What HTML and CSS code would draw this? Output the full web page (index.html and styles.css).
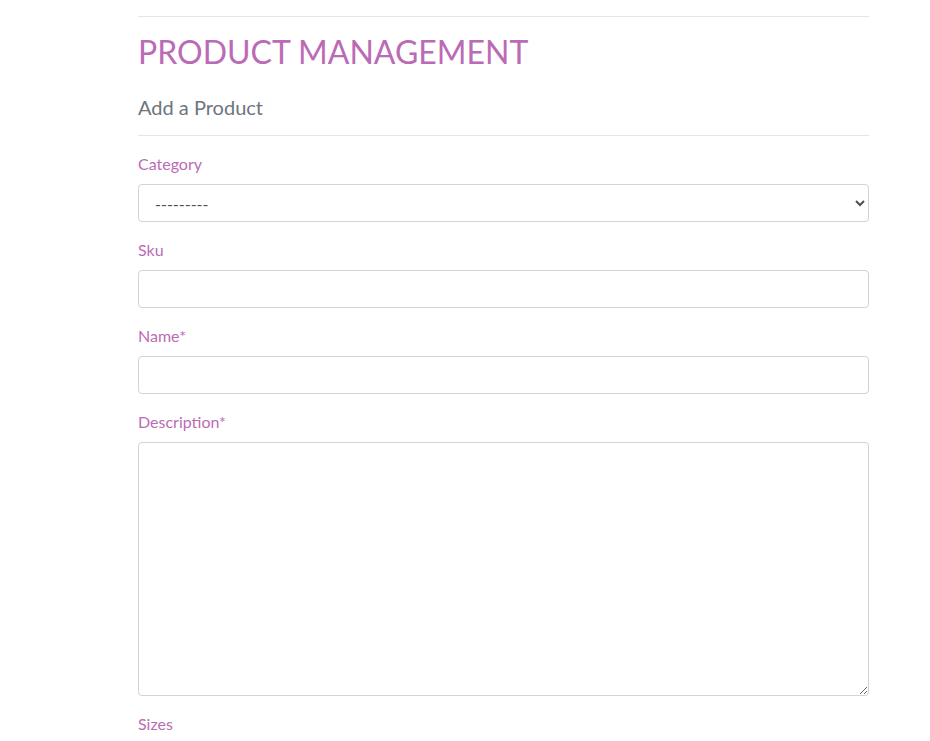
FILE: index.html
```html
<!DOCTYPE html>
<html lang="en">
<head>
<meta charset="utf-8">
<title>Product Management</title>
<link rel="stylesheet" href="styles.css">
</head>
<body>
<div class="container">
  <hr class="rule">
  <h2 class="page-title">PRODUCT MANAGEMENT</h2>
  <h5 class="subtitle">Add a Product</h5>
  <hr class="rule">
  <form class="form">
    <div class="form-group">
      <label class="label" for="category">Category</label>
      <select id="category" class="control select">
        <option>---------</option>
      </select>
    </div>
    <div class="form-group">
      <label class="label" for="sku">Sku</label>
      <input id="sku" class="control" type="text">
    </div>
    <div class="form-group">
      <label class="label" for="name">Name*</label>
      <input id="name" class="control" type="text">
    </div>
    <div class="form-group">
      <label class="label" for="description">Description*</label>
      <textarea id="description" class="control textarea" rows="10"></textarea>
    </div>
    <div class="form-group">
      <label class="label" for="sizes">Sizes</label>
    </div>
  </form>
</div>
</body>
</html>
```
FILE: styles.css
```css
* { box-sizing: border-box; }
html, body { margin: 0; padding: 0; background: #fff; }
body {
  font-family: Lato, "Open Sans", "Liberation Sans", sans-serif;
  font-size: 16px;
  line-height: 1.5;
  color: #212529;
}
.container {
  width: 731px;
  margin-left: 138px;
}
.rule {
  margin: 16px 0;
  border: 0;
  border-top: 1px solid rgba(0,0,0,0.1);
}
.page-title {
  margin: 0 0 24px;
  font-size: 32px;
  font-weight: 400;
  line-height: 1.2;
  color: #bb6bb5;
}
.subtitle {
  margin: 0;
  font-size: 20px;
  font-weight: 400;
  line-height: 1.2;
  color: #6c757d;
}
.form-group { margin-bottom: 16px; }
.label {
  display: inline-block;
  margin-bottom: 8px;
  color: #bb6bb5;
}
.control {
  display: block;
  width: 100%;
  height: 38px;
  padding: 6px 12px;
  font-family: inherit;
  font-size: 16px;
  line-height: 1.5;
  color: #495057;
  background: #fff;
  border: 1px solid #ced4da;
  border-radius: 4px;
}
.select { color: #495057; }
.textarea { height: 254px; resize: vertical; }
```
